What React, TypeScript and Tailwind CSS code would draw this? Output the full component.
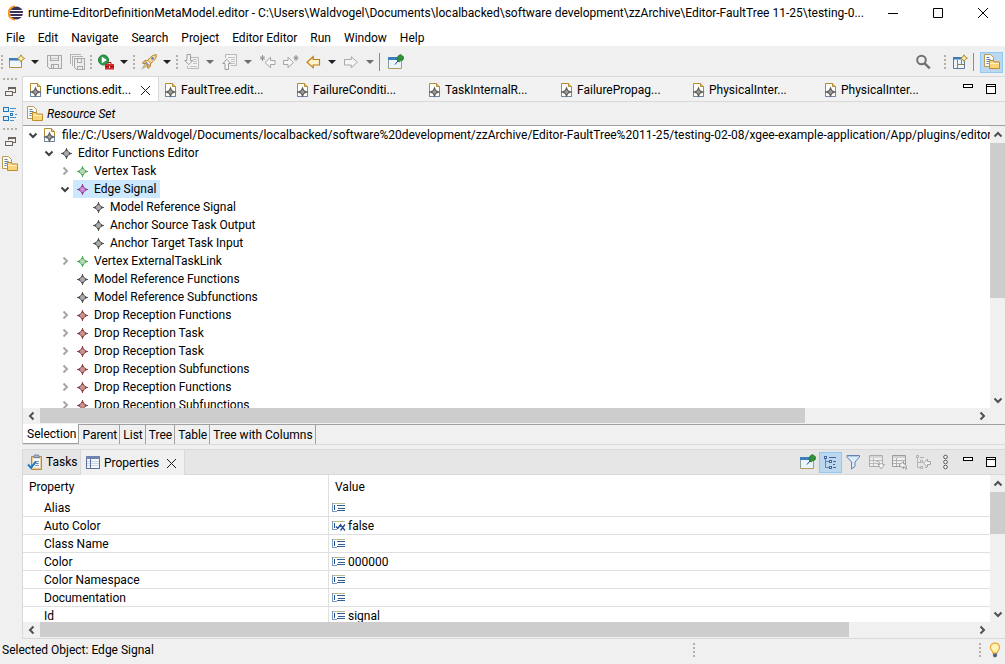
import React from 'react';
import clsx from 'clsx';

type IconProps = { children: React.ReactNode; crisp?: boolean };

const Icon: React.FC<IconProps> = ({ children, crisp }) => (
  <svg
    width="16"
    height="16"
    viewBox="0 0 16 16"
    fill="none"
    className="shrink-0"
    shapeRendering={crisp ? 'crispEdges' : undefined}
    aria-hidden="true"
  >
    {children}
  </svg>
);

const EclipseLogo = () => (
  <Icon>
    <path d="M7 1A7 7 0 0 0 7 15 7.500 7.500 0 0 1 7 1z" fill="#f7941e" stroke="#f7941e" />
    <circle cx="8.500" cy="8" r="6.500" fill="#3a3158" />
    <path d="M2.500 5.500h12.300M2 8.500h13M2.500 11.500h12.300" stroke="#fff" />
  </Icon>
);

const NewIcon = () => (
  <Icon>
    <path d="M.500 4.500h12v9H.500z" fill="#eef6fd" stroke="#b98f32" />
    <path d="M0 4h10v2.500H0z" fill="#3d7ab8" />
    <path d="M12 .800l1.300 2.400 2.400 1.300-2.400 1.300L12 8.200l-1.300-2.400L8.300 4.500l2.400-1.300z" fill="#fdf0b0" stroke="#b08a28" />
  </Icon>
);

const SaveIcon = () => (
  <Icon crisp>
    <path d="M.500 1.500h14v13h-12l-2-2z" fill="#ececec" stroke="#a8a8a8" />
    <path d="M3.500 1.500h8v5h-8zM4.500 14v-4h7v4M6.500 11v3" stroke="#a8a8a8" />
    <path d="M4 4h7" stroke="#c4c4c4" />
  </Icon>
);

const SaveAllIcon = () => (
  <Icon crisp>
    <path d="M.500 10V.500h10M2.500 12V2.500h10" stroke="#b4b4b4" />
    <path d="M4.500 4.500h10v11h-8l-2-2z" fill="#ececec" stroke="#a8a8a8" />
    <path d="M7.500 4.500h4v4h-4zM7.500 15v-3h5v3" stroke="#a8a8a8" />
  </Icon>
);

const RunIcon = () => (
  <Icon>
    <circle cx="5.500" cy="6" r="5" fill="#2f9a4b" stroke="#1d7a3a" />
    <path d="M3.800 2.800L8.900 6 3.800 9.200z" fill="#fff" />
    <path d="M7 10h9v5.500H7z" fill="#d42a2a" />
    <path d="M10 10V8.500h3V10" stroke="#a51818" />
    <path d="M7 12.500h9" stroke="#8c1010" />
    <path d="M11 12h1v2h-1z" fill="#ffd9a0" />
  </Icon>
);

const RocketIcon = () => (
  <Icon>
    <path d="M15.300.700c-3 0-6 2-8.600 5.600l3 3C13.300 7 15.600 4 15.300.700z" fill="#f3d79b" stroke="#b98437" />
    <path d="M6.700 6.300L3.500 6.700l-2 2.600 3.300.300M9.700 9.300l-.4 3.300-2.400 1.900-.500-3.200" fill="#e3b96c" stroke="#b98437" />
    <path d="M5.200 7.800L8.200 10.800 4 13.500.500 15.500l2-3.700z" fill="#8a93a3" />
    <path d="M4.500 9.700L1 15l5-3.500z" fill="#f4c44c" />
    <circle cx="11.500" cy="4.500" r="1.300" fill="#4d7ab5" />
  </Icon>
);

const NextAnnotationIcon = () => (
  <Icon>
    <path d="M6.500 3.500h8v11h-11V12" fill="#f3f3f3" stroke="#b9b9b9" />
    <path d="M9 5.500h4M9 7.500h4M9 9.500h4M6 12.500h7" stroke="#c2c2c2" />
    <path d="M3 .500h3.500v6h2.200L4.800 10.700.800 6.500H3z" fill="#f4f4f4" stroke="#9c9c9c" />
  </Icon>
);

const PrevAnnotationIcon = () => (
  <Icon>
    <path d="M3.500 4V.500h11v11h-6" fill="#f3f3f3" stroke="#b9b9b9" />
    <path d="M6 3.500h7M9 5.500h4M9 7.500h4M9 9.500h4" stroke="#c2c2c2" />
    <path d="M3 15.500h3.500v-6h2.200L4.800 5.300.800 9.500H3z" fill="#f4f4f4" stroke="#9c9c9c" />
  </Icon>
);

const LastEditIcon = () => (
  <Icon>
    <path d="M15 6.500h-4.500V3.300L5 8.500l5.500 5.200v-3.200H15z" fill="#f6f6f6" stroke="#a4a4a4" />
    <path d="M2.500 1v6M0 4h5M.800 2.300l3.400 3.400M4.200 2.300L.800 5.700" stroke="#8f8f8f" />
  </Icon>
);

const NextEditIcon = () => (
  <Icon>
    <path d="M.500 6.500H5V3.300l5.500 5.200L5 13.700v-3.200H.500z" fill="#f6f6f6" stroke="#a4a4a4" />
    <path d="M13 1v6M10.500 4h5M11.300 2.300l3.400 3.400M14.700 2.300l-3.400 3.400" stroke="#8f8f8f" />
  </Icon>
);

const BackIcon = () => (
  <Icon>
    <path d="M13.500 5.500H7.200V2.700L1 8.200l6.200 5.500V11h6.300z" fill="#fdf3cf" stroke="#c07f14" strokeWidth="1.200" />
  </Icon>
);

const ForwardIcon = () => (
  <Icon>
    <path d="M.500 5.500h6.800V2.700l6.200 5.500-6.200 5.500V11H.500z" fill="#f6f6f6" stroke="#a8a8a8" />
  </Icon>
);

const PinIcon = () => (
  <Icon>
    <path d="M.500 3.500h13v11H.500z" fill="#e9f6fd" stroke="#b99a55" />
    <path d="M0 3h12v3H0z" fill="#3f7dbb" />
    <path d="M0 6v8.500" stroke="#6d9fcd" />
    <path d="M10 2l2.500-1.500L15.800 3 15 6l-2 .500-2 1.500-2-2z" fill="#2f9139" stroke="#1f6f2a" strokeWidth=".7" />
    <path d="M10 7l-3 3.500" stroke="#30405a" />
  </Icon>
);

const SearchIcon = () => (
  <Icon>
    <circle cx="5.500" cy="6" r="4.300" stroke="#707070" strokeWidth="2" />
    <path d="M8.600 9.300l5.200 5" stroke="#707070" strokeWidth="2.400" />
  </Icon>
);

const OpenPerspectiveIcon = () => (
  <Icon>
    <path d="M1.500 3.500h11v11h-11z" fill="#eef6fd" stroke="#5f7896" />
    <path d="M1 3h10v2.500H1z" fill="#3d7ab8" />
    <path d="M5.500 6v8M5.500 10.500H12M9.500 6v4" stroke="#8e8144" />
    <path d="M12 .800l1.200 2.200 2.200 1.200L13.200 5.400 12 7.600l-1.200-2.200-2.200-1.200L10.800 3z" fill="#fdf0b0" stroke="#b08a28" />
  </Icon>
);

const ResourceIcon = () => (
  <Icon>
    <path d="M.500.500h6l3 3v9h-9z" fill="#fdfaf0" stroke="#b79a55" />
    <path d="M2.500 3.500h3M2.500 5.500h4M2.500 7.500h3M2.500 9.500h2" stroke="#5b7fae" />
    <path d="M5.500 14.500v-8h3.500l1.200 1.500h5.300v6.500z" fill="#fbd57a" stroke="#c18a2c" />
    <path d="M6 9.500h9" stroke="#fff0c0" />
  </Icon>
);

const EditorFileIcon = () => (
  <Icon>
    <path d="M2.500 1.500h7l3 3v10h-10z" fill="#fdfdf8" stroke="#b58a34" />
    <path d="M2.500 9v5.500M12.500 9v5.500h-10" stroke="#6d84a3" />
    <path d="M9.500 1.500v3h3" fill="#e5c87f" stroke="#b58a34" />
    <path d="M7.500 4.500l1.700 3.800L13.500 10l-4.300 1.700L7.500 15.500l-1.700-3.800L1.500 10l4.300-1.700z" fill="#636363" />
    <path d="M7.500 8l2 2-2 2-2-2z" fill="#a0a0a0" />
  </Icon>
);

type DiamondColor = 'gray' | 'green' | 'purple' | 'red';

const diamondColors: Record<DiamondColor, [string, string]> = {
  gray: ['#555555', '#a9a9a9'],
  green: ['#4fae5b', '#b9d6b8'],
  purple: ['#96439b', '#d08bd3'],
  red: ['#944646', '#c69393'],
};

const DiamondIcon: React.FC<{ color: DiamondColor }> = ({ color }) => {
  const [edge, fill] = diamondColors[color];
  return (
    <Icon>
      <path d="M8.500 4l1.700 2.800L13 8.500l-2.800 1.700L8.500 13l-1.700-2.800L4 8.500l2.800-1.700z" fill={fill} stroke={edge} />
      <path d="M8.500 3v3M8.500 11v3M3 8.500h3M11 8.500h3" stroke={edge} />
    </Icon>
  );
};

const RestoreIcon = () => (
  <Icon crisp>
    <path d="M6.500 6V3.500h7v5H11M6 4h8" stroke="#6b645c" />
    <path d="M3.500 7.500h7v4h-7zM3 7h8" fill="#f0f0f0" stroke="#6b645c" />
  </Icon>
);

const OutlineIcon = () => (
  <Icon crisp>
    <path d="M1.500 1.500h5v4h-5zM1.500 10.500h5v4h-5z" fill="#d9ecfb" stroke="#2477b8" />
    <path d="M8 2.500h6M8 5.500h4M8 11.500h6M8 14.500h4M13 8.500h2" stroke="#4b8fc7" />
    <path d="M8.500 7.500h2v2h-2z" fill="#fff" stroke="#2477b8" />
  </Icon>
);

const TasksIcon = () => (
  <Icon>
    <path d="M4.500 2.500h10v13h-10z" fill="#e8cf9c" stroke="#b2894a" />
    <path d="M6 4.500h7v9H6z" fill="#f7fbff" />
    <path d="M6.500 3.500l1-2.500h4l1 2.500z" fill="#a7b7cf" stroke="#72859f" />
    <path d="M8 7.500h4M9 9.500h3M8 11.500h4" stroke="#7b96b8" />
    <path d="M1 10.500l3 3.200 5-6.200" stroke="#1d7cc4" strokeWidth="2" />
  </Icon>
);

const PropertiesIcon = () => (
  <Icon crisp>
    <path d="M1.500 1.500h13v12h-13z" fill="#f4f8fd" stroke="#5c6d96" />
    <path d="M1 1h14v3H1z" fill="#6f82b0" />
    <path d="M2 6.500h12M2 8.500h12M2 10.500h12" stroke="#c9d5e6" />
    <path d="M5.500 4v9" stroke="#5c6d96" />
  </Icon>
);

const CategoriesIcon = () => (
  <Icon crisp>
    <path d="M2.500 3v10.500H6M3 7.500h3" stroke="#6b82ad" />
    <path d="M1.500 2.500h2v2h-2zM6.500 6.500h2v2h-2zM6.500 12.500h2v2h-2z" fill="#dcebfa" stroke="#4863a0" />
    <path d="M6 3.500h7M10 7.500h3M10 10.500h2M10 13.500h3" stroke="#4863a0" />
  </Icon>
);

const FilterIcon = () => (
  <Icon>
    <path d="M1 1.500h12.500v1.500L9 8v4.500L5.500 15V8L1 3z" fill="#dcebf8" stroke="#6682ae" />
    <path d="M2 2.500h10.500" stroke="#a9cbe6" />
  </Icon>
);

const TableNextIcon = () => (
  <Icon>
    <path d="M.500 1.500h13v11H.500z" fill="#f0f0f0" stroke="#adadad" />
    <path d="M.500 3h13M1 6.500h12M1 9.500h12M4.500 4v8" stroke="#b9b9b9" />
    <path d="M7.500 7.500c3 0 3.500 1 3.500 3H9l3.200 4.500 3.300-4.500H13.500" fill="#f6f6f6" stroke="#a8a8a8" />
  </Icon>
);

const TableRestoreIcon = () => (
  <Icon>
    <path d="M.500 1.500h13v11H.500z" fill="#f0f0f0" stroke="#9c9c9c" />
    <path d="M.500 3h13M1 6.500h12M1 9.500h12M4.500 4v8" stroke="#b0b0b0" />
    <path d="M14 15.500c1-4-.5-5.500-2.500-5.500V7.500L7 11l4.500 3.500V12.500c1.500 0 2 1 2.500 3z" fill="#f6f6f6" stroke="#9c9c9c" />
  </Icon>
);

const TreeBackIcon = () => (
  <Icon>
    <path d="M2.500 3v10.500H5M3 8.500h3" stroke="#b5b5b5" />
    <path d="M1.500 1.500h2v2h-2zM5.500 6.500h2v2h-2zM5.500 12.500h2v2h-2zM5 3.500h4M10 13.500h2" fill="#eee" stroke="#aeaeae" />
    <path d="M15.500 7.500h-3V5L8.500 9l4 4v-2.500h3z" fill="#f3f0ea" stroke="#aaa39a" />
  </Icon>
);

const ViewMenuIcon = () => (
  <Icon>
    <circle cx="7.500" cy="3" r="1.800" fill="#fff" stroke="#555" />
    <circle cx="7.500" cy="8" r="1.800" fill="#fff" stroke="#555" />
    <circle cx="7.500" cy="13" r="1.800" fill="#fff" stroke="#555" />
  </Icon>
);

const MinimizeIcon = () => (
  <Icon crisp>
    <path d="M2.500 3.500h9v3h-9z" fill="#fff" stroke="#000" />
  </Icon>
);

const MaximizeIcon = () => (
  <Icon crisp>
    <path d="M2.500 3.500h9v9h-9zM2 5.500h10" fill="#fff" stroke="#000" />
  </Icon>
);

const CloseIcon = () => (
  <Icon>
    <path d="M3 4l9 9M12 4l-9 9" stroke="#1a1a1a" />
  </Icon>
);

const TextValueIcon = () => (
  <Icon crisp>
    <path d="M1 3.500h13" stroke="#b8bc8c" />
    <path d="M1.500 3v9M2 11.500h4" stroke="#7f98c0" />
    <path d="M3.500 5v5" stroke="#20508c" />
    <path d="M6 5.500h8M7 8h7M6 10.500h8" stroke="#2f5f94" />
  </Icon>
);

const BooleanValueIcon = () => (
  <Icon>
    <path d="M1 3.500h13" stroke="#b8bc8c" />
    <path d="M1.500 3v9M2 11.500h4" stroke="#7f98c0" />
    <path d="M3.500 5v5" stroke="#20508c" />
    <path d="M5 8.500l1.800 2L10 6M9.500 7l4.500 5.500M14 6.500L9.500 12.500" stroke="#2a4f8f" strokeWidth="1.300" />
  </Icon>
);

const BulbIcon = () => (
  <Icon>
    <path d="M8 1.200c-3 0-4.600 2-4.600 4.300 0 2.200 2.100 3 2.400 5.300h4.400c.300-2.300 2.400-3.100 2.400-5.300C12.600 3.200 11 1.200 8 1.200z" fill="#fff3b8" stroke="#eda92c" strokeWidth="1.200" />
    <path d="M6 11.500h4V14l-1 1.300H7L6 14z" fill="#50657d" />
  </Icon>
);

const Dots: React.FC<{ horizontal?: boolean }> = ({ horizontal }) =>
  horizontal ? (
    <svg width="14" height="2" viewBox="0 0 14 2" className="shrink-0" aria-hidden="true">
      <path d="M0 0h2v2H0zM4 0h2v2H4zM8 0h2v2H8zM12 0h2v2h-2z" fill="#b5afa5" />
    </svg>
  ) : (
    <span className="flex w-[5px] shrink-0 pl-px">
      <svg width="2" height="14" viewBox="0 0 2 14" aria-hidden="true">
        <path d="M0 0h2v2H0zM0 4h2v2H0zM0 8h2v2H0zM0 12h2v2H0z" fill="#b5afa5" />
      </svg>
    </span>
  );

const Separator = () => <span className="mx-px h-[18px] w-px shrink-0 bg-[#8c8c8c]" />;

type ToolButtonProps = { label: string; pressed?: boolean; children: React.ReactNode };

const ToolButton: React.FC<ToolButtonProps> = ({ label, pressed, children }) => (
  <button
    type="button"
    aria-label={label}
    className={clsx(
      'flex h-[21px] w-[23px] shrink-0 items-center justify-center',
      pressed && 'border border-[#90c8f6] bg-[#bcd8ef]'
    )}
  >
    {children}
  </button>
);

const DropButton: React.FC<{ label: string; dim?: boolean }> = ({ label, dim }) => (
  <button
    type="button"
    aria-label={label}
    className={clsx('flex h-[21px] w-[15px] shrink-0 items-center pl-[3px]', dim ? 'text-[#6e6e6e]' : 'text-[#202020]')}
  >
    <svg width="8" height="4" viewBox="0 0 8 4" aria-hidden="true">
      <path d="M0 0h8L4 4z" fill="currentColor" />
    </svg>
  </button>
);

const chevronPaths = {
  up: 'M1.500 6.500L5 3l3.500 3.500',
  down: 'M1.500 3.500L5 7l3.500-3.500',
  left: 'M6.500 1.500L3 5l3.500 3.500',
  right: 'M3.500 1.500L7 5 3.500 8.500',
};

const Chevron: React.FC<{ dir: keyof typeof chevronPaths }> = ({ dir }) => (
  <svg width="10" height="10" viewBox="0 0 10 10" fill="none" aria-hidden="true">
    <path d={chevronPaths[dir]} stroke="currentColor" strokeWidth="2" />
  </svg>
);

type ScrollProps = { label: string; size: number };

const VerticalScroll: React.FC<ScrollProps> = ({ label, size }) => (
  <div className="flex w-[15px] shrink-0 flex-col bg-[#f0f0f0] text-[#505050]">
    <button type="button" aria-label={`${label} up`} className="flex h-[17px] items-center justify-center">
      <Chevron dir="up" />
    </button>
    <div className="min-h-0 flex-1">
      <div className="bg-[#cdcdcd]" style={{ height: `${size}%` }} />
    </div>
    <button type="button" aria-label={`${label} down`} className="flex h-[17px] items-center justify-center">
      <Chevron dir="down" />
    </button>
  </div>
);

const HorizontalScroll: React.FC<ScrollProps> = ({ label, size }) => (
  <div className="mr-[15px] flex h-[15px] shrink-0 bg-[#f0f0f0] text-[#505050]">
    <button type="button" aria-label={`${label} left`} className="flex w-[17px] items-center justify-center">
      <Chevron dir="left" />
    </button>
    <div className="flex-1">
      <div className="h-full bg-[#cdcdcd]" style={{ width: `${size}%` }} />
    </div>
    <button type="button" aria-label={`${label} right`} className="flex w-[17px] items-center justify-center">
      <Chevron dir="right" />
    </button>
  </div>
);

const menus = ['File', 'Edit', 'Navigate', 'Search', 'Project', 'Editor Editor', 'Run', 'Window', 'Help'];

const editorTabs = [
  'FaultTree.edit...',
  'FailureConditi...',
  'TaskInternalR...',
  'FailurePropag...',
  'PhysicalInter...',
  'PhysicalInter...',
];

type TreeItem = {
  label: string;
  level: number;
  state?: 'open' | 'closed';
  icon: DiamondColor | 'file';
  selected?: boolean;
};

const treeItems: TreeItem[] = [
  {
    label:
      'file:/C:/Users/Waldvogel/Documents/localbacked/software%20development/zzArchive/Editor-FaultTree%2011-25/testing-02-08/xgee-example-application/App/plugins/editor.',
    level: 0,
    state: 'open',
    icon: 'file',
  },
  { label: 'Editor Functions Editor', level: 1, state: 'open', icon: 'gray' },
  { label: 'Vertex Task', level: 2, state: 'closed', icon: 'green' },
  { label: 'Edge Signal', level: 2, state: 'open', icon: 'purple', selected: true },
  { label: 'Model Reference Signal', level: 3, icon: 'gray' },
  { label: 'Anchor Source Task Output', level: 3, icon: 'gray' },
  { label: 'Anchor Target Task Input', level: 3, icon: 'gray' },
  { label: 'Vertex ExternalTaskLink', level: 2, state: 'closed', icon: 'green' },
  { label: 'Model Reference Functions', level: 2, icon: 'gray' },
  { label: 'Model Reference Subfunctions', level: 2, icon: 'gray' },
  { label: 'Drop Reception Functions', level: 2, state: 'closed', icon: 'red' },
  { label: 'Drop Reception Task', level: 2, state: 'closed', icon: 'red' },
  { label: 'Drop Reception Task', level: 2, state: 'closed', icon: 'red' },
  { label: 'Drop Reception Subfunctions', level: 2, state: 'closed', icon: 'red' },
  { label: 'Drop Reception Functions', level: 2, state: 'closed', icon: 'red' },
  { label: 'Drop Reception Subfunctions', level: 2, state: 'closed', icon: 'red' },
];

const indents = ['pl-[2px]', 'pl-[18px]', 'pl-[34px]', 'pl-[50px]'];

const pageTabs = ['Parent', 'List', 'Tree', 'Table', 'Tree with Columns'];

const properties = [
  { name: 'Alias', value: '' },
  { name: 'Auto Color', value: 'false', bool: true },
  { name: 'Class Name', value: '' },
  { name: 'Color', value: '000000' },
  { name: 'Color Namespace', value: '' },
  { name: 'Documentation', value: '' },
  { name: 'Id', value: 'signal' },
];

const TitleBar = () => (
  <header className="flex h-[26px] shrink-0 items-center bg-white pl-2">
    <EclipseLogo />
    <h1 className="ml-1 min-w-0 flex-1 truncate">
      runtime-EditorDefinitionMetaModel.editor - C:\Users\Waldvogel\Documents\localbacked\software
      development\zzArchive\Editor-FaultTree 11-25\testing-0...
    </h1>
    <button type="button" aria-label="Minimize window" className="flex h-6 w-[45px] shrink-0 items-center justify-center">
      <svg width="10" height="10" viewBox="0 0 10 10" fill="none" aria-hidden="true">
        <path d="M0 5.500h10" stroke="#000" />
      </svg>
    </button>
    <button type="button" aria-label="Maximize window" className="flex h-6 w-[45px] shrink-0 items-center justify-center">
      <svg width="10" height="10" viewBox="0 0 10 10" fill="none" aria-hidden="true">
        <path d="M.500.500h9v9h-9z" stroke="#000" />
      </svg>
    </button>
    <button type="button" aria-label="Close window" className="flex h-6 w-[45px] shrink-0 items-center justify-center">
      <svg width="10" height="10" viewBox="0 0 10 10" fill="none" aria-hidden="true">
        <path d="M0 0l10 10M10 0L0 10" stroke="#000" />
      </svg>
    </button>
  </header>
);

const Toolbar = () => (
  <div className="flex h-[30px] shrink-0 items-center pt-0.5 pr-0.5">
    <Dots />
    <ToolButton label="New"><NewIcon /></ToolButton>
    <DropButton label="New menu" />
    <ToolButton label="Save"><SaveIcon /></ToolButton>
    <ToolButton label="Save all"><SaveAllIcon /></ToolButton>
    <Dots />
    <ToolButton label="Run external tool"><RunIcon /></ToolButton>
    <DropButton label="External tools menu" />
    <Dots />
    <ToolButton label="Launch"><RocketIcon /></ToolButton>
    <DropButton label="Launch menu" />
    <Dots />
    <ToolButton label="Next annotation"><NextAnnotationIcon /></ToolButton>
    <DropButton label="Next annotation menu" dim />
    <ToolButton label="Previous annotation"><PrevAnnotationIcon /></ToolButton>
    <DropButton label="Previous annotation menu" dim />
    <ToolButton label="Previous edit location"><LastEditIcon /></ToolButton>
    <ToolButton label="Next edit location"><NextEditIcon /></ToolButton>
    <ToolButton label="Back"><BackIcon /></ToolButton>
    <DropButton label="Back menu" />
    <ToolButton label="Forward"><ForwardIcon /></ToolButton>
    <DropButton label="Forward menu" dim />
    <Separator />
    <span className="w-[3px]" />
    <ToolButton label="Pin editor"><PinIcon /></ToolButton>
    <div className="ml-auto flex items-center">
      <ToolButton label="Search"><SearchIcon /></ToolButton>
      <span className="w-2" />
      <Dots />
      <ToolButton label="Open perspective"><OpenPerspectiveIcon /></ToolButton>
      <span className="w-px" />
      <Separator />
      <span className="w-[5px]" />
      <ToolButton label="Resource" pressed><ResourceIcon /></ToolButton>
    </div>
  </div>
);

const SideBar = () => (
  <aside className="flex w-[22px] shrink-0 flex-col items-center pt-0.5 pr-0.5">
    <Dots horizontal />
    <button type="button" aria-label="Restore outline" className="mt-1"><RestoreIcon /></button>
    <button type="button" aria-label="Outline" className="mt-1.5"><OutlineIcon /></button>
    <span className="h-1.5" />
    <Dots horizontal />
    <button type="button" aria-label="Restore explorer" className="mt-1"><RestoreIcon /></button>
    <button type="button" aria-label="Project explorer" className="mt-1.5"><ResourceIcon /></button>
  </aside>
);

const TreeRow: React.FC<{ item: TreeItem }> = ({ item }) => (
  <li
    role="treeitem"
    aria-level={item.level + 1}
    aria-selected={!!item.selected}
    className={clsx('flex h-[18px] items-center', indents[item.level])}
  >
    <span
      className={clsx('flex w-4 shrink-0 justify-center', item.state === 'open' ? 'text-[#404040]' : 'text-[#a6a6a6]')}
    >
      {item.state === 'open' && <Chevron dir="down" />}
      {item.state === 'closed' && <Chevron dir="right" />}
    </span>
    <span
      className={clsx(
        'flex h-full items-center gap-1 pr-1 pl-px whitespace-nowrap',
        item.selected && 'bg-[#cce8ff]'
      )}
    >
      {item.icon === 'file' ? <EditorFileIcon /> : <DiamondIcon color={item.icon} />}
      {item.label}
    </span>
  </li>
);

const EditorArea = () => (
  <section className="flex min-h-0 flex-1 flex-col border-b border-l border-[#d9d9d9]">
    <div className="flex h-[26px] shrink-0 border-y border-[#d9d9d9] bg-[#f2f2f2]">
      <div role="tablist" className="flex min-w-0 flex-1 overflow-hidden pt-px">
        <div className="-mt-px flex w-[136px] shrink-0 items-center border-r border-[#d9d9d9] bg-white pt-px pl-[5px]">
          <button type="button" role="tab" aria-selected="true" className="flex items-center gap-0.5">
            <EditorFileIcon />
            Functions.edit...
          </button>
          <button type="button" aria-label="Close tab" className="mr-1 ml-auto"><CloseIcon /></button>
        </div>
        {editorTabs.map((name, i) => (
          <button
            key={i}
            type="button"
            role="tab"
            aria-selected="false"
            className="flex w-[132px] shrink-0 items-center gap-0.5 pl-1"
          >
            <EditorFileIcon />
            {name}
          </button>
        ))}
      </div>
      <div className="flex items-center pr-0.5">
        <ToolButton label="Minimize editors"><MinimizeIcon /></ToolButton>
        <ToolButton label="Maximize editors"><MaximizeIcon /></ToolButton>
      </div>
    </div>

    <div className="flex h-6 shrink-0 items-center gap-1 border-b border-[#a0a0a0] pl-1 italic">
      <ResourceIcon />
      Resource Set
    </div>

    <div className="flex min-h-0 flex-1">
      <ul role="tree" className="min-w-0 flex-1 overflow-hidden bg-white">
        {treeItems.map((item, i) => (
          <TreeRow key={i} item={item} />
        ))}
      </ul>
      <VerticalScroll label="Scroll tree" size={62.3} />
    </div>
    <HorizontalScroll label="Scroll tree" size={82} />

    <div role="tablist" className="flex h-[21px] shrink-0 pt-px">
      <button type="button" role="tab" aria-selected="true" className="border-r border-b border-[#a0a0a0] bg-white pr-0.5 pl-1">
        Selection
      </button>
      {pageTabs.map((name) => (
        <button
          key={name}
          type="button"
          role="tab"
          aria-selected="false"
          className="border-t border-r border-[#a0a0a0] pr-0.5 pl-[3px]"
        >
          {name}
        </button>
      ))}
      <span className="flex-1 border-t border-[#a0a0a0]" />
    </div>
  </section>
);

const PropertiesArea = () => (
  <section className="mt-1 flex h-[190px] shrink-0 flex-col border-b border-l border-[#d9d9d9] pb-px">
    <div className="flex h-[26px] shrink-0 border-y border-[#d9d9d9] bg-[#e6e6e6]">
      <div role="tablist" className="flex flex-1">
        <button
          type="button"
          role="tab"
          aria-selected="false"
          className="flex w-[58px] shrink-0 items-center gap-[3px] border-r border-[#d9d9d9] pl-1"
        >
          <TasksIcon />
          Tasks
        </button>
        <div className="-mb-px flex w-[104px] shrink-0 items-center border-r border-[#d9d9d9] bg-[#f0f0f0] pl-1">
          <button type="button" role="tab" aria-selected="true" className="flex items-center gap-[3px]">
            <PropertiesIcon />
            Properties
          </button>
          <button type="button" aria-label="Close tab" className="mr-1 ml-auto"><CloseIcon /></button>
        </div>
      </div>
      <div className="flex items-center pr-0.5">
        <ToolButton label="Pin to selection"><PinIcon /></ToolButton>
        <ToolButton label="Show categories" pressed><CategoriesIcon /></ToolButton>
        <ToolButton label="Show advanced properties"><FilterIcon /></ToolButton>
        <ToolButton label="Locate value"><TableNextIcon /></ToolButton>
        <ToolButton label="Restore default value"><TableRestoreIcon /></ToolButton>
        <ToolButton label="Show parent"><TreeBackIcon /></ToolButton>
        <ToolButton label="View menu"><ViewMenuIcon /></ToolButton>
        <ToolButton label="Minimize view"><MinimizeIcon /></ToolButton>
        <ToolButton label="Maximize view"><MaximizeIcon /></ToolButton>
      </div>
    </div>

    <div className="flex min-h-0 flex-1">
      <div className="min-w-0 flex-1 overflow-hidden bg-white">
        <table className="w-full table-fixed border-separate border-spacing-0 text-left">
          <thead>
            <tr className="h-6">
              <th className="w-[306px] border-r border-[#e0e0e0] p-0 pl-1.5 font-normal">Property</th>
              <th className="p-0 pl-1.5 font-normal">Value</th>
            </tr>
          </thead>
          <tbody>
            {properties.map((prop) => (
              <tr key={prop.name} className="h-[18px]">
                <td className="border-r border-b border-[#e0e0e0] p-0 pl-[21px]">{prop.name}</td>
                <td className="border-b border-[#e0e0e0] p-0 pl-0.5">
                  <span className="flex items-center gap-px">
                    {prop.bool ? <BooleanValueIcon /> : <TextValueIcon />}
                    {prop.value}
                  </span>
                </td>
              </tr>
            ))}
          </tbody>
        </table>
      </div>
      <VerticalScroll label="Scroll properties" size={37} />
    </div>
    <HorizontalScroll label="Scroll properties" size={86.7} />
  </section>
);

export default function App() {
  return (
    <div className="flex h-screen flex-col overflow-hidden bg-[#f0f0f0] font-['Roboto','Open_Sans',sans-serif] text-[12px] leading-4 text-black">
      <TitleBar />
      <nav className="flex h-5 shrink-0 items-center gap-px bg-white pt-1">
        {menus.map((name) => (
          <button key={name} type="button" className="px-1.5">
            {name}
          </button>
        ))}
      </nav>
      <Toolbar />
      <div className="flex min-h-0 flex-1">
        <SideBar />
        <main className="flex min-w-0 flex-1 flex-col">
          <EditorArea />
          <PropertiesArea />
        </main>
      </div>
      <footer className="flex h-[25px] shrink-0 items-center pr-0.5 pb-[3px]">
        <p className="w-[69%] pl-0.5">Selected Object: Edge Signal</p>
        <Dots />
        <span className="ml-auto flex items-center gap-1">
          <Dots />
          <BulbIcon />
        </span>
      </footer>
    </div>
  );
}
